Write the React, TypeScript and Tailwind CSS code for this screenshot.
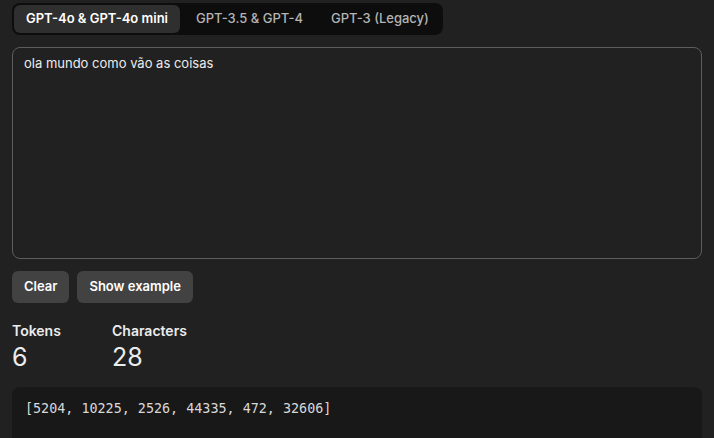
import { useState } from "react";

const tabs = ["GPT-4o & GPT-4o mini", "GPT-3.5 & GPT-4", "GPT-3 (Legacy)"];

export default function App() {
  const [active, setActive] = useState(0);
  const [text, setText] = useState("ola mundo como vão as coisas");

  return (
    <div className="h-screen overflow-hidden bg-[#212121] px-3 pt-[3px] font-['Inter','Noto_Sans',sans-serif] text-[#ececec]">
      {/* Model tabs */}
      <div className="inline-flex gap-1 rounded-lg bg-[#0d0d0d] p-[2px]">
        {tabs.map((t, i) => (
          <button
            key={t}
            onClick={() => setActive(i)}
            className={
              i === active
                ? "h-7 rounded-md bg-[#2f2f2f] px-3 text-[13px] font-semibold text-white"
                : "h-7 rounded-md px-3 text-[13px] font-medium text-[#b4b4b4]"
            }
          >
            {t}
          </button>
        ))}
      </div>

      {/* Input */}
      <textarea
        value={text}
        onChange={e => setText(e.target.value)}
        spellCheck
        className="mt-3 block h-[212px] w-full resize-none rounded-lg border border-[#5d5d5d] bg-[#212121] px-[11px] py-[5px] text-[13px] leading-5 text-[#ececec] focus:outline-none"
      />

      <div className="mt-3 flex gap-2">
        <button
          onClick={() => setText("")}
          className="h-8 rounded-md bg-[#424242] px-3 text-[13px] font-semibold text-white"
        >
          Clear
        </button>
        <button className="h-8 rounded-md bg-[#424242] px-3 text-[13px] font-semibold text-white">
          Show example
        </button>
      </div>

      {/* Stats */}
      <div className="mt-[18px] flex">
        <div className="w-[100px]">
          <div className="text-[14px] font-semibold leading-5">Tokens</div>
          <div className="text-[25px] leading-8">6</div>
        </div>
        <div>
          <div className="text-[14px] font-semibold leading-5">Characters</div>
          <div className="text-[25px] leading-8">{text.length}</div>
        </div>
      </div>

      {/* Token ids */}
      <div className="mt-[14px] h-[80px] rounded-lg bg-[#181818] px-[13px] py-[12px] font-['DejaVu_Sans_Mono',monospace] text-[13.4px] leading-5 text-[#d8d8d8]">
        [5204, 10225, 2526, 44335, 472, 32606]
      </div>
    </div>
  );
}
